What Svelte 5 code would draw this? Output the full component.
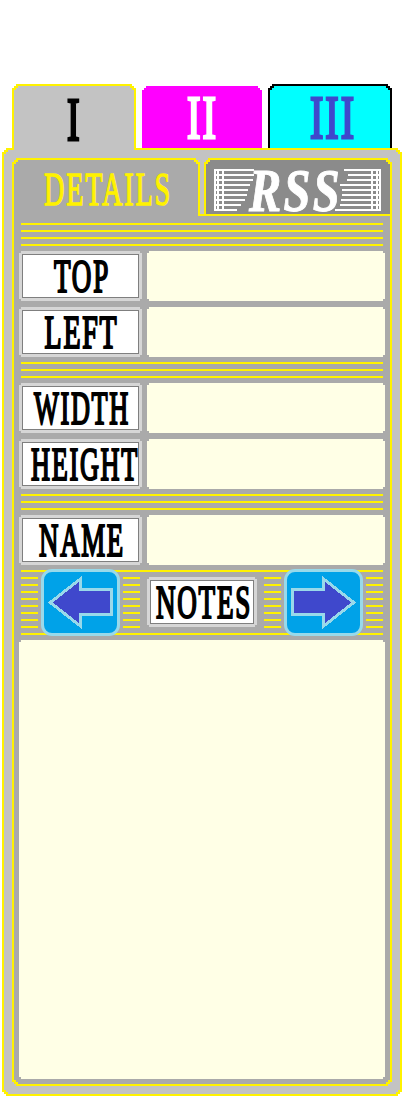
<script>
  const fields = [
    { rule: 23, rows: [{ t: 'TOP', x: 35, w: 56 }, { t: 'LEFT', x: 25.5, w: 74 }] },
    { rule: 16, rows: [{ t: 'WIDTH', x: 15, w: 96 }, { t: 'HEIGHT', x: 12, w: 108 }] },
    { rule: 16, rows: [{ t: 'NAME', x: 20, w: 86 }] }
  ];
  const leftStripes = [40, 40, 39, 36, 34, 33, 31, 27, 23];
  const rightStripes = [130, 134, 133, 126, 128, 128, 127, 126, 121];
</script>

{#snippet word(t, x, y, w, size)}
  <text {x} {y} textLength={w} lengthAdjust="spacingAndGlyphs" font-size={size}>{t}</text>
{/snippet}

{#snippet arrow(flip)}
  <button class="arrow" aria-label={flip ? 'Next' : 'Previous'}>
    <svg width="73" height="61" viewBox="3 3 73 61" shape-rendering="crispEdges">
      <path
        d="M9.3 33.5 L39.6 9.8 V20.6 H70.6 V45.6 H39.6 V57.2 Z"
        transform={flip ? 'translate(79 0) scale(-1 1)' : undefined}
        fill="#3f48cc" stroke="#99d9ea" stroke-width="3" />
    </svg>
  </button>
{/snippet}

<main>
  <nav class="tabs">
    <div class="tab one"><div class="face">
      <svg width="120" height="64">{@render word('I', 53, 53.5, 14.5, 61)}</svg>
    </div></div>
    <div class="tab two">
      <svg width="120" height="62">{@render word('II', 45, 52, 31, 61)}</svg>
    </div>
    <div class="tab three"><div class="face">
      <svg width="120" height="62">{@render word('III', 40, 52, 46, 61)}</svg>
    </div></div>
  </nav>

  <section class="panel"><div class="panel-face">
    <nav class="subtabs">
      <div class="sub details"><div class="face">
        <svg width="184" height="56">{@render word('DETAILS', 30, 45, 128, 47)}</svg>
      </div></div>
      <div class="sub rss"><div class="face">
        <svg width="184" height="54">
          <g fill="#fff" shape-rendering="crispEdges" transform="translate(8 9)">
            {#each leftStripes as w, i}<rect x="0" y={i * 5} width={w} height="2" />{/each}
            {#each rightStripes as x, i}<rect {x} y={i * 5} width={167 - x} height="2" />{/each}
            {#each [0, 3, 8, 157, 162, 165] as x}<rect {x} y="0" width="2" height="42" />{/each}
          </g>
          {@render word('RSS', 43, 51, 93, 62)}
        </svg>
      </div></div>
    </nav>

    <div class="body"><div class="body-face">
      {#each fields as group}
        <div class="rule" style="height: {group.rule}px"></div>
        <div class="rows">
          {#each group.rows as row}
            <div class="row">
              <div class="label"><div class="plate">
                <svg width="115" height="42">{@render word(row.t, row.x - 4, 37, row.w, 47)}</svg>
              </div></div>
              <div class="field"></div>
            </div>
          {/each}
        </div>
      {/each}

      <div class="notes-bar">
        <span class="seg"></span>
        {@render arrow(false)}
        <span class="seg"></span>
        <div class="label notes-label"><div class="plate">
          <svg width="102" height="42">{@render word('NOTES', 5, 37, 96, 47)}</svg>
        </div></div>
        <span class="seg"></span>
        {@render arrow(true)}
        <span class="seg"></span>
      </div>

      <div class="field notes"></div>
    </div></div>
  </section>
</main>

<style>
  :global(body) { background: #fff; }
  main {
    --yellow: #fff200;
    --top-steps: polygon(0 100%, 0 4px, 2px 4px, 2px 2px, 4px 2px, 4px 0, calc(100% - 4px) 0, calc(100% - 4px) 2px, calc(100% - 2px) 2px, calc(100% - 2px) 4px, 100% 4px, 100% 100%);
    --bottom-steps: polygon(0 0, 0 calc(100% - 4px), 2px calc(100% - 4px), 2px calc(100% - 2px), 4px calc(100% - 2px), 4px 100%, calc(100% - 4px) 100%, calc(100% - 4px) calc(100% - 2px), calc(100% - 2px) calc(100% - 2px), calc(100% - 2px) calc(100% - 4px), 100% calc(100% - 4px), 100% 0);
    --all-steps: polygon(0 4px, 2px 4px, 2px 2px, 4px 2px, 4px 0, calc(100% - 4px) 0, calc(100% - 4px) 2px, calc(100% - 2px) 2px, calc(100% - 2px) 4px, 100% 4px, 100% calc(100% - 4px), calc(100% - 2px) calc(100% - 4px), calc(100% - 2px) calc(100% - 2px), calc(100% - 4px) calc(100% - 2px), calc(100% - 4px) 100%, 4px 100%, 4px calc(100% - 2px), 2px calc(100% - 2px), 2px calc(100% - 4px), 0 calc(100% - 4px));
    --notch: polygon(0 2px, 2px 2px, 2px 0, calc(100% - 2px) 0, calc(100% - 2px) 2px, 100% 2px, 100% calc(100% - 2px), calc(100% - 2px) calc(100% - 2px), calc(100% - 2px) 100%, 2px 100%, 2px calc(100% - 2px), 0 calc(100% - 2px));
    box-sizing: border-box;
    width: 404px;
    height: 1098px;
    padding: 84px 2px 2px;
    overflow: hidden;
    font-family: "Liberation Serif", serif;
  }
  main * { box-sizing: border-box; }
  svg { display: block; overflow: visible; }
  text { fill: currentColor; stroke: currentColor; stroke-width: 2.2px; letter-spacing: 3px; }

  .tabs { display: flex; padding-left: 10px; height: 64px; align-items: flex-start; }
  .tabs text { stroke-width: 3px; }
  .tab { clip-path: var(--top-steps); padding: 2px 2px 0; }
  .face { height: 100%; clip-path: var(--top-steps); }
  .one { width: 124px; height: 66px; background: var(--yellow); z-index: 1; position: relative; }
  .one .face { background: #c3c3c3; color: #000; }
  .two { width: 120px; height: 62px; margin: 2px 6px 0; padding: 0; background: #f0f; color: #fff; }
  .three { width: 124px; height: 64px; background: #000; }
  .three .face { background: #0ff; color: #3f48cc; }

  .panel { height: 948px; padding: 2px; background: var(--yellow); clip-path: var(--all-steps); }
  .panel-face { height: 944px; padding: 8px; background: #c3c3c3; clip-path: var(--all-steps); }
  .subtabs { display: flex; gap: 4px; height: 56px; }
  .sub { width: 188px; height: 58px; padding: 2px 2px 0; background: var(--yellow); clip-path: var(--top-steps); position: relative; z-index: 1; }
  .details .face { background: #aaa; color: var(--yellow); }
  .details text { stroke-width: 1.4px; }
  .rss { padding-bottom: 2px; }
  .rss .face { background: #8b8b8b; color: #fff; font-style: italic; font-weight: bold; }
  .rss text { stroke-width: 1px; }

  .body { height: 872px; padding: 2px; background: var(--yellow); clip-path: var(--bottom-steps); }
  .body-face {
    height: 868px; padding: 7px 5px 5px; background: #aaa; clip-path: var(--bottom-steps);
    display: flex; flex-direction: column; gap: 5px;
  }
  .rule, .seg { background: repeating-linear-gradient(var(--yellow) 0 2px, transparent 2px 7px); }
  .rule { margin: 0 2px; flex: none; }
  .rows { display: flex; flex-direction: column; gap: 6px; }
  .row { display: flex; gap: 5px; height: 50px; }
  .label { width: 123px; height: 50px; padding: 3px; background: #d6d6d6; clip-path: var(--notch); color: #000; }
  .plate { height: 44px; border: 1px solid #7f7f7f; background: #fff; }
  .field { flex: 1; background: #ffffe6; clip-path: var(--notch); }

  .notes-bar {
    display: flex; align-items: center; gap: 3px; height: 65px; margin: 0 2px; flex: none;
    background: linear-gradient(var(--yellow), var(--yellow)) top / 100% 2px no-repeat,
      linear-gradient(var(--yellow), var(--yellow)) bottom / 100% 2px no-repeat;
  }
  .seg { width: 17px; height: 51px; flex: none; }
  .notes-label { width: 110px; flex: none; margin: 0 4px 1px; }
  .arrow {
    flex: none; width: 79px; height: 67px; padding: 0;
    border: 3px solid #99d9ea; border-radius: 11px; background: #00a2e8;
  }
</style>
